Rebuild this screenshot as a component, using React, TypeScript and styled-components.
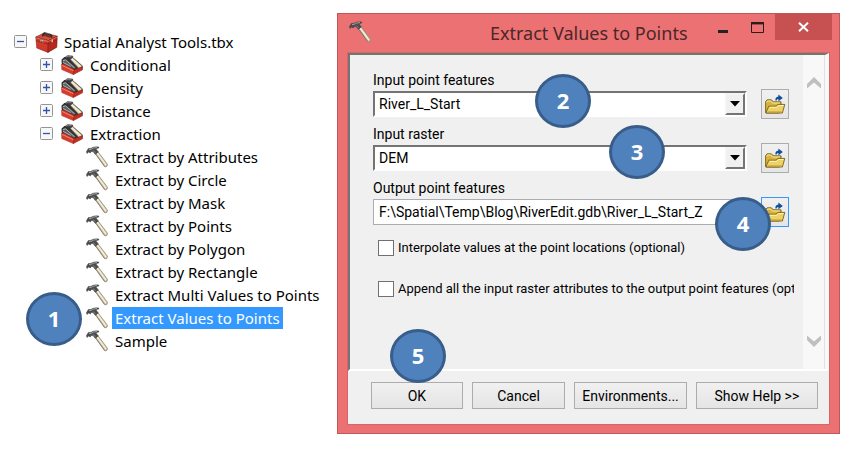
import React from "react";
import styled, { createGlobalStyle, css } from "styled-components";

const GlobalStyle = createGlobalStyle`
  *, *::before, *::after { box-sizing: border-box; }
  body {
    margin: 0;
    background: #fff;
    color: #000;
    font-family: "Noto Sans", "Open Sans", sans-serif;
    font-size: 14px;
  }
  button, input, select { font: inherit; color: inherit; margin: 0; }
`;

const Page = styled.main`
  display: grid;
  grid-template-columns: 337px minmax(0, 1fr);
  align-items: start;
  padding: 13px 25px 22px 0;
`;

/* ---------- numbered callouts ---------- */

const Anchor = styled.div<{ $grow?: boolean }>`
  position: relative;
  display: flex;
  align-items: center;
  ${(p) => p.$grow && "flex: 1; min-width: 0;"}
`;

const Callout = styled.span<{ $left?: string; $right?: string; $top: string }>`
  position: absolute;
  z-index: 2;
  left: ${(p) => p.$left ?? "auto"};
  right: ${(p) => p.$right ?? "auto"};
  top: ${(p) => p.$top};
  display: flex;
  align-items: center;
  justify-content: center;
  width: 56px;
  height: 54px;
  padding-bottom: 3px;
  border: 3px solid #385d8a;
  border-radius: 50%;
  background: #4f81bd;
  color: #fff;
  font-family: "Open Sans", sans-serif;
  font-size: 22px;
  font-weight: 700;
  line-height: 24px;
  pointer-events: none;
`;

/* ---------- toolbox tree ---------- */

const Tree = styled.nav`
  padding-top: 17px;
`;

const Branch = styled.ul<{ $leaves?: boolean }>`
  list-style: none;
  margin: 0;
  padding: 0 0 0 ${(p) => (p.$leaves ? "46px" : "26px")};
`;

const RootBranch = styled(Branch)`
  padding-left: 14px;
`;

const TreeRow = styled.div`
  position: relative;
  display: flex;
  align-items: center;
  height: 23px;
  gap: 8px;
`;

const Expander = styled.button`
  display: flex;
  flex: none;
  padding: 0;
  border: 0;
  background: none;
`;

const TreeLabel = styled.span<{ $root?: boolean }>`
  display: flex;
  align-items: center;
  gap: ${(p) => (p.$root ? "6px" : "7px")};
  font-size: 15px;
  line-height: 22px;
  white-space: nowrap;
`;

const Leaf = styled.a<{ $selected?: boolean }>`
  display: flex;
  align-items: center;
  gap: 4px;
  color: #000;
  font-size: 15px;
  line-height: 22px;
  text-decoration: none;
  white-space: nowrap;

  span {
    padding: 0 3px;
    ${(p) => p.$selected && css`background: #3399ff; color: #fff;`}
  }
`;

/* ---------- dialog ---------- */

const Dialog = styled.section`
  border: 1px solid #c0575b;
  background: #eb7173;
  padding: 0 9px 8px;
`;

const TitleBar = styled.header`
  display: grid;
  grid-template-columns: 135px minmax(0, 1fr) auto;
  align-items: start;
  height: 38px;
  margin-right: -2px;
`;

const TitleIcon = styled.span`
  display: flex;
  padding: 7px 0 0 2px;
`;

const Title = styled.h1`
  margin: 0;
  padding: 6px 0 0 8px;
  color: #4a2728;
  font-size: 18px;
  font-weight: 400;
  line-height: 26px;
  white-space: nowrap;
`;

const WindowButtons = styled.div`
  display: flex;
`;

const WindowButton = styled.button<{ $close?: boolean }>`
  display: flex;
  align-items: center;
  justify-content: center;
  width: ${(p) => (p.$close ? "57px" : "35px")};
  height: 26px;
  padding: 0;
  border: 0;
  background: ${(p) => (p.$close ? "#c75050" : "transparent")};
`;

const Body = styled.form`
  border: 1px solid #d96568;
  background: #f0f0f0;
  font-family: Roboto, "Open Sans", sans-serif;
`;

const Viewport = styled.div`
  display: flex;
  border-top: 2px solid #747474;
  border-left: 2px solid #747474;
  border-right: 4px solid #f9f9f9;
  border-bottom: 2px solid #fff;
`;

const Fields = styled.div`
  flex: 1;
  min-width: 0;
  padding: 16px 9px 71px 23px;
`;

const ScrollTrack = styled.div`
  display: flex;
  flex: none;
  flex-direction: column;
  align-items: center;
  justify-content: space-between;
  width: 22px;
  padding: 22px 0;
  border-right: 1px solid #e0e0e0;
  background: #f8f8f8;
`;

const ScrollButton = styled.button`
  display: flex;
  padding: 0;
  border: 0;
  background: none;
`;

const Field = styled.div`
  margin-bottom: 6px;
`;

const FieldLabel = styled.label`
  display: block;
  line-height: 18px;
`;

const FieldRow = styled.div`
  display: flex;
  align-items: center;
  gap: 14px;
  height: 30px;
  padding-right: 5px;
`;

const Combo = styled.div`
  display: grid;
  flex: 1;
  height: 26px;
  border: 2px solid;
  border-color: #747474 #fff #fff #747474;
  background: #fff;
`;

const Select = styled.select`
  grid-area: 1 / 1;
  width: 100%;
  padding: 0 24px 0 4px;
  border: 0;
  background: #fff;
  appearance: none;
  outline: none;
`;

const ComboArrow = styled.span`
  grid-area: 1 / 1;
  justify-self: end;
  display: flex;
  align-items: center;
  justify-content: center;
  width: 20px;
  border: 2px solid;
  border-color: #f4f4f4 #747474 #747474 #f4f4f4;
  background: #f0f0f0;
  pointer-events: none;
`;

const TextInput = styled.input`
  flex: 1;
  min-width: 0;
  height: 26px;
  padding: 0 5px;
  border: 1px solid #abadb3;
  background: #fff;
  outline: none;
`;

const BrowseButton = styled.button<{ $focused?: boolean }>`
  display: flex;
  align-items: center;
  justify-content: center;
  flex: none;
  width: 28px;
  height: 30px;
  padding: 0;
  border: 1px solid ${(p) => (p.$focused ? "#3399ff" : "#acacac")};
  background: linear-gradient(#f0f0f0, #e5e5e5);
`;

const Options = styled.div`
  display: grid;
  gap: 23px;
  padding: 6px 0 0 5px;
`;

const Option = styled.label`
  display: flex;
  align-items: center;
  gap: 4px;
  overflow: hidden;
  font-size: 13px;
  line-height: 18px;
  white-space: nowrap;
`;

const CheckBox = styled.input`
  flex: none;
  width: 16px;
  height: 16px;
  border: 1px solid #707070;
  background: #fff;
  appearance: none;

  &:checked { background: #3399ff; }
`;

const Footer = styled.footer`
  display: flex;
  gap: 9px;
  padding: 11px 11px 15px 23px;
`;

const PushButton = styled.button<{ $size: number }>`
  flex: ${(p) => p.$size} 1 0;
  width: 100%;
  height: 27px;
  padding: 0;
  border: 1px solid #acacac;
  background: linear-gradient(#f0f0f0, #e5e5e5);
  white-space: nowrap;
`;

const OkSlot = styled.div`
  position: relative;
  display: flex;
  flex: 93 1 0;
`;

/* ---------- drawings ---------- */

const HammerIcon = () => (
  <svg width="22" height="22" viewBox="0 0 22 22" aria-hidden="true">
    <path d="M9.5 7.5 L11.8 5.6 L21.4 18.2 Q21.8 20.6 19.2 21 Z" fill="#d9cfb4" stroke="#8d8570" strokeWidth=".8" />
    <path d="M11.3 7.2 L19.9 19" stroke="#f7f1de" strokeWidth="1.2" />
    <path d="M9.8 8.4 L18.5 20.6" stroke="#77705e" strokeWidth=".7" />
    <path d="M.4 5.7 L2.3 2.6 L4.7 2.4 Q7.4.3 12.8 1 L12.6 2.1 Q10.6 2.2 10.3 3.3 L12.3 5.9 L9.3 8.4 L7 5.6 L5.3 5.5 L4.4 6.9 L2.5 5.9 L1.1 7.5 Z" fill="#4b4d4f" stroke="#3a3c3e" strokeWidth=".5" />
    <path d="M3 3.6 L5.2 3.3 Q7.6 1.4 11 1.6" fill="none" stroke="#a9adaf" strokeWidth=".9" />
    <path d="M7.4 4.8 L9.6 6.9" stroke="#85898b" />
  </svg>
);

const ToolboxIcon = () => (
  <svg width="23" height="22" viewBox="0 0 23 22" aria-hidden="true">
    <path d="M.8 6 L9.5 1.8 L22.2 5.2 L13.4 9.6 Z" fill="#d9513f" stroke="#7e2219" strokeWidth=".6" />
    <path d="M6.5 4.2 L10.5 2.6 L18.5 4.8 L14.8 6.8 Z" fill="#7d3027" />
    <path d="M7.6 5.6 Q7.6 3 9.4 2 L15.4 3.6 Q16.8 4.4 16.6 6.6" fill="none" stroke="#2c2c2c" strokeWidth="1.5" />
    <path d="M9.6 1.5 L15 2.9" stroke="#8b8b8b" strokeWidth=".7" />
    <path d="M.8 6 L13.4 9.6 L13 21.4 L1.8 17 Z" fill="#d2392a" stroke="#7e2219" strokeWidth=".6" />
    <path d="M13.4 9.6 L22.2 5.2 L21.8 16.2 L13 21.4 Z" fill="#b8281c" stroke="#6b1810" strokeWidth=".6" />
    <path d="M1 9.6 L13.2 13.2 L22 8.6" fill="none" stroke="#8a2016" strokeWidth=".7" />
    <path d="M1.2 6.9 L13.3 10.5 L21.8 6.2" fill="none" stroke="#f08f80" strokeWidth=".7" />
    <path d="M5.2 8.2 L8.6 9.2 L8.5 12 L7.5 11.6 L7.4 10 L6.2 9.7 L6.2 11.3 L5.3 11 Z" fill="#eee8e4" stroke="#5a2520" strokeWidth=".4" />
    <path d="M16.6 9 L18 8.3 L17.9 11 L16.6 11.7 Z" fill="#efc4ba" />
  </svg>
);

const ToolsetIcon = () => (
  <svg width="22" height="20" viewBox="0 0 22 20" aria-hidden="true">
    <path d="M.6 4.6 L3.4 2 L12 2.4 L21.4 10.6 L21.6 13 L12.8 16 L.8 10.4 Z" fill="#353535" />
    <path d="M.6 9.4 L3.6 8.8 L13.4 14 L12.4 19.6 L.8 14.6 Z" fill="#dc3a2a" stroke="#8b2018" strokeWidth=".5" />
    <path d="M12.8 14.8 L21.6 11.6 L21.5 14.8 L12.4 19.6 Z" fill="#c22e20" stroke="#7c1b13" strokeWidth=".5" />
    <path d="M1 10.4 L12.6 15.8" stroke="#f3988a" strokeWidth=".8" />
    <path d="M1.2 4.9 L4.4 3.4 L15.6 13 L12.6 14 L1.4 8 Z" fill="#5d5f60" stroke="#222" strokeWidth=".5" />
    <path d="M2 5.6 L4.6 4.9 L13.6 12.8 M2 7.4 L9.6 11.4" fill="none" stroke="#c3c6c8" strokeWidth=".8" />
    <path d="M9 4 L11.4 2.4 L21.2 11.2 L17.6 13 Z" fill="#e5dbc1" stroke="#7f7763" strokeWidth=".6" />
    <path d="M10.6 3.6 L19.6 11.6" stroke="#faf5e6" strokeWidth=".9" />
    <path d="M3.8 2.4 L6.6.6 L11.8 1 L11.6 2.6 L8.9 4.6 L6.6 3.2 L4.4 4 Z" fill="#444648" stroke="#222" strokeWidth=".4" />
    <path d="M5.2 2 L7.3 1.2 L10.4 1.5" fill="none" stroke="#a4a7a9" strokeWidth=".7" />
  </svg>
);

const ExpanderIcon = ({ open }: { open?: boolean }) => (
  <svg width="13" height="13" viewBox="0 0 13 13" aria-hidden="true">
    <rect x=".5" y=".5" width="12" height="12" rx="1" fill="#f7f7f7" stroke="#959595" />
    <path d={open ? "M3 6.5H10" : "M3 6.5H10M6.5 3V10"} stroke="#3453a8" strokeWidth="1.3" />
  </svg>
);

const OpenFolderIcon = () => (
  <svg width="22" height="22" viewBox="0 0 22 22" aria-hidden="true">
    <path d="M1.6 19.5 V8.5 L3.2 6.8 H7.4 L9 8.8 H17 V11 L15.5 20 H2.4 Z" fill="#d6b23e" stroke="#756018" strokeWidth=".9" />
    <path d="M2.6 9.4 L3.8 8 H6.8 L8.5 10 H16" fill="none" stroke="#fbec9e" />
    <path d="M1.8 20 L4.8 13.2 H12.4 L13.8 11.4 H20.8 L18.4 20 Z" fill="#efd266" stroke="#756018" strokeWidth=".9" />
    <path d="M5.6 14.3 H13 L14.4 12.5 H19.4" fill="none" stroke="#fff4b3" />
    <path d="M3.6 18.9 H17.4" stroke="#c79f2e" />
    <path d="M11.4 7.6 Q11 4 14.4 3.6 V1.4 L18.8 4.9 L14.4 8.3 V6.1 Q12.6 6 12.6 7.6 Z" fill="#0c4f9c" />
  </svg>
);

const Chevron = ({ up }: { up?: boolean }) => (
  <svg width="14" height="12" viewBox="0 0 14 12" aria-hidden="true">
    <path d={up ? "M0 7 L7 0 L14 7 V11.5 L7 5.4 L0 11.5 Z" : "M0 .5 L7 6.6 L14 .5 V5 L7 12 L0 5 Z"} fill="#bfbfbf" />
  </svg>
);

const ArrowDown = () => (
  <svg width="10" height="6" viewBox="0 0 10 6" aria-hidden="true">
    <path d="M0 0H10L5 5.5Z" fill="#000" />
  </svg>
);

const MinimizeIcon = () => (
  <svg width="10" height="12" viewBox="0 0 10 12" aria-hidden="true">
    <path d="M0 10.5H10" stroke="#222" strokeWidth="3" />
  </svg>
);

const MaximizeIcon = () => (
  <svg width="13" height="11" viewBox="0 0 13 11" aria-hidden="true">
    <path d="M.5 1V10.5H12.5V1" fill="none" stroke="#2c1c1c" />
    <path d="M0 1.2H13" stroke="#2c1c1c" strokeWidth="2.4" />
  </svg>
);

const CloseIcon = () => (
  <svg width="11" height="10" viewBox="0 0 11 10" aria-hidden="true">
    <path d="M1 .8L10 9.2M10 .8L1 9.2" stroke="#fff" strokeWidth="2" />
  </svg>
);

/* ---------- content ---------- */

const toolsets = ["Conditional", "Density", "Distance", "Extraction"];

const tools = [
  "Extract by Attributes",
  "Extract by Circle",
  "Extract by Mask",
  "Extract by Points",
  "Extract by Polygon",
  "Extract by Rectangle",
  "Extract Multi Values to Points",
  "Extract Values to Points",
  "Sample",
];

const selectedTool = "Extract Values to Points";

const ToolTree = () => (
  <Tree aria-label="Toolbox">
    <RootBranch>
      <li>
        <TreeRow>
          <Expander aria-label="Collapse Spatial Analyst Tools"><ExpanderIcon open /></Expander>
          <TreeLabel $root><ToolboxIcon />Spatial Analyst Tools.tbx</TreeLabel>
        </TreeRow>
        <Branch>
          {toolsets.map((name) => {
            const open = name === "Extraction";
            return (
              <li key={name}>
                <TreeRow>
                  <Expander aria-label={`${open ? "Collapse" : "Expand"} ${name}`}><ExpanderIcon open={open} /></Expander>
                  <TreeLabel><ToolsetIcon />{name}</TreeLabel>
                </TreeRow>
                {open && (
                  <Branch $leaves>
                    {tools.map((tool) => (
                      <li key={tool}>
                        <TreeRow>
                          <Leaf href="#" $selected={tool === selectedTool}>
                            <HammerIcon /><span>{tool}</span>
                          </Leaf>
                          {tool === selectedTool && <Callout $left="-60px" $top="-14px">1</Callout>}
                        </TreeRow>
                      </li>
                    ))}
                  </Branch>
                )}
              </li>
            );
          })}
        </Branch>
      </li>
    </RootBranch>
  </Tree>
);

type ComboFieldProps = { id: string; label: string; value: string; children: React.ReactNode };

const ComboField = ({ id, label, value, children }: ComboFieldProps) => (
  <Field>
    <FieldLabel htmlFor={id}>{label}</FieldLabel>
    <FieldRow>
      <Anchor $grow>
        <Combo>
          <Select id={id} defaultValue={value}><option>{value}</option></Select>
          <ComboArrow><ArrowDown /></ComboArrow>
        </Combo>
        {children}
      </Anchor>
      <BrowseButton type="button" aria-label={`Browse for ${label}`}><OpenFolderIcon /></BrowseButton>
    </FieldRow>
  </Field>
);

export default function App() {
  return (
    <>
      <GlobalStyle />
      <Page>
        <ToolTree />
        <Dialog role="dialog" aria-labelledby="dialog-title">
          <TitleBar>
            <TitleIcon><HammerIcon /></TitleIcon>
            <Title id="dialog-title">Extract Values to Points</Title>
            <WindowButtons>
              <WindowButton aria-label="Minimize"><MinimizeIcon /></WindowButton>
              <WindowButton aria-label="Maximize"><MaximizeIcon /></WindowButton>
              <WindowButton $close aria-label="Close"><CloseIcon /></WindowButton>
            </WindowButtons>
          </TitleBar>
          <Body onSubmit={(e) => e.preventDefault()}>
            <Viewport>
              <Fields>
                <ComboField id="points" label="Input point features" value="River_L_Start">
                  <Callout $right="156px" $top="-17px">2</Callout>
                </ComboField>
                <ComboField id="raster" label="Input raster" value="DEM">
                  <Callout $right="82px" $top="-20px">3</Callout>
                </ComboField>
                <Field>
                  <FieldLabel htmlFor="output">Output point features</FieldLabel>
                  <FieldRow>
                    <TextInput id="output" defaultValue={"F:\\Spatial\\Temp\\Blog\\RiverEdit.gdb\\River_L_Start_Z"} />
                    <Anchor>
                      <BrowseButton type="button" $focused aria-label="Browse for Output point features"><OpenFolderIcon /></BrowseButton>
                      <Callout $right="18px" $top="0">4</Callout>
                    </Anchor>
                  </FieldRow>
                </Field>
                <Options>
                  <Option><CheckBox type="checkbox" />Interpolate values at the point locations (optional)</Option>
                  <Option><CheckBox type="checkbox" />Append all the input raster attributes to the output point features (optional)</Option>
                </Options>
              </Fields>
              <ScrollTrack>
                <ScrollButton type="button" aria-label="Scroll up"><Chevron up /></ScrollButton>
                <ScrollButton type="button" aria-label="Scroll down"><Chevron /></ScrollButton>
              </ScrollTrack>
            </Viewport>
            <Footer>
              <OkSlot>
                <PushButton $size={1}>OK</PushButton>
                <Callout $left="19px" $top="-53px">5</Callout>
              </OkSlot>
              <PushButton type="button" $size={93}>Cancel</PushButton>
              <PushButton type="button" $size={112}>Environments...</PushButton>
              <PushButton type="button" $size={122}>Show Help &gt;&gt;</PushButton>
            </Footer>
          </Body>
        </Dialog>
      </Page>
    </>
  );
}
